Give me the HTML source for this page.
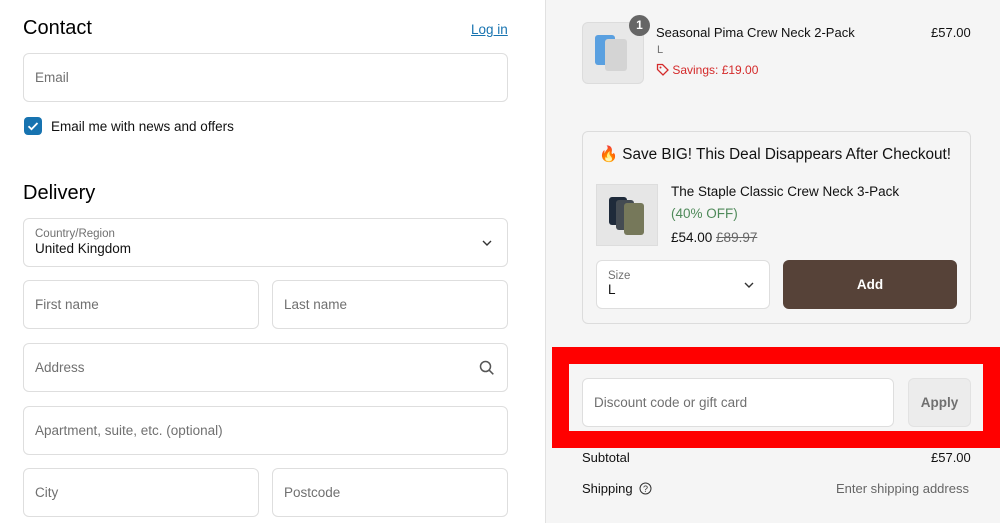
<!DOCTYPE html>
<html><head><meta charset="utf-8"><style>
*{box-sizing:border-box;margin:0;padding:0}
body{width:1000px;height:523px;overflow:hidden;font-family:"Liberation Sans",Arial,sans-serif;background:#fff;position:relative;color:#000}
.a{position:absolute}
.in{position:absolute;border:1px solid #dedede;border-radius:6px;background:#fff;font-size:13.5px;color:#707070;padding-left:11px;display:flex;align-items:center}
h2{position:absolute;font-weight:400;font-size:20px}
.r{position:absolute;left:545px;top:0;width:455px;height:523px;background:#f5f5f5;border-left:1px solid #e1e1e1}
</style></head><body>
<h2 style="left:23px;top:17px">Contact</h2>
<div class="a" style="left:471px;top:22px;font-size:13.5px;color:#1773b0;text-decoration:underline">Log in</div>
<div class="in" style="left:23px;top:53px;width:485px;height:49px">Email</div>
<div class="a" style="left:24px;top:117px;width:18px;height:18px;background:#1773b0;border-radius:4px"><svg width="18" height="18"><path d="M4.5 9.2l3 3 6-6.2" stroke="#fff" stroke-width="1.8" fill="none"/></svg></div>
<div class="a" style="left:51px;top:119px;font-size:13.5px;color:#111">Email me with news and offers</div>
<h2 style="left:23px;top:182px">Delivery</h2>
<div class="in" style="left:23px;top:218px;width:485px;height:49px;display:block;padding-top:9px">
<div style="font-size:11.5px;color:#707070">Country/Region</div><div style="font-size:13.5px;color:#111;margin-top:1px">United Kingdom</div>
<svg class="a" style="right:14px;top:19px" width="12" height="10"><path d="M2 3l4 4 4-4" stroke="#333" stroke-width="1.4" fill="none"/></svg></div>
<div class="in" style="left:23px;top:280px;width:236px;height:49px">First name</div>
<div class="in" style="left:272px;top:280px;width:236px;height:49px">Last name</div>
<div class="in" style="left:23px;top:343px;width:485px;height:49px">Address
<svg class="a" style="right:12px;top:16px" width="16" height="16"><circle cx="6.5" cy="6.5" r="5" stroke="#555" stroke-width="1.5" fill="none"/><path d="M10.3 10.3l4 4" stroke="#555" stroke-width="1.5"/></svg></div>
<div class="in" style="left:23px;top:406px;width:485px;height:49px">Apartment, suite, etc. (optional)</div>
<div class="in" style="left:23px;top:468px;width:236px;height:49px">City</div>
<div class="in" style="left:272px;top:468px;width:236px;height:49px">Postcode</div>
<div class="r"></div>
<div class="a" style="left:582px;top:22px;width:62px;height:62px;border:1px solid #dcdcdc;border-radius:6px;background:#e8e8e8">
<div class="a" style="left:12px;top:12px;width:20px;height:30px;background:#5aa0e0;border-radius:3px"></div>
<div class="a" style="left:22px;top:16px;width:22px;height:32px;background:#d4d4d4;border-radius:3px"></div></div>
<div class="a" style="left:629px;top:15px;width:21px;height:21px;border-radius:50%;background:#666;color:#fff;font-size:12px;font-weight:bold;text-align:center;line-height:21px">1</div>
<div class="a" style="left:656px;top:25px;font-size:13px;color:#111">Seasonal Pima Crew Neck 2-Pack</div>
<div class="a" style="left:931px;top:25px;font-size:13px;color:#111">£57.00</div>
<div class="a" style="left:657px;top:44px;font-size:11px;color:#707070">L</div>
<div class="a" style="left:656px;top:63px;font-size:12px;color:#d42a2a">
<svg width="13" height="13" style="vertical-align:-2px"><path d="M1.5 6.5V1.5h5l5.5 5.5-5 5z" stroke="#d42a2a" stroke-width="1.3" fill="none"/><circle cx="4.5" cy="4.5" r="1" fill="#d42a2a"/></svg> Savings: £19.00</div>
<div class="a" style="left:582px;top:131px;width:389px;height:193px;border:1px solid #dcdcdc;border-radius:6px"></div>
<div class="a" style="left:599px;top:145px;font-size:15.3px;color:#111">🔥 Save BIG! This Deal Disappears After Checkout!</div>
<div class="a" style="left:596px;top:184px;width:62px;height:62px;background:#e6e6e6;border:1px solid #ddd">
<div class="a" style="left:12px;top:12px;width:18px;height:28px;background:#1e2a3a;border-radius:3px"></div>
<div class="a" style="left:19px;top:15px;width:18px;height:30px;background:#444b52;border-radius:3px"></div>
<div class="a" style="left:27px;top:18px;width:20px;height:32px;background:#76785a;border-radius:3px"></div></div>
<div class="a" style="left:671px;top:184px;font-size:13.5px;color:#111">The Staple Classic Crew Neck 3-Pack</div>
<div class="a" style="left:671px;top:206px;font-size:13.5px;color:#4f8a5a">(40% OFF)</div>
<div class="a" style="left:671px;top:230px;font-size:13.5px;color:#111">£54.00 <span style="color:#666;text-decoration:line-through">£89.97</span></div>
<div class="a" style="left:596px;top:260px;width:174px;height:49px;background:#fff;border:1px solid #dedede;border-radius:6px;padding:9px 0 0 11px">
<div style="font-size:11.5px;color:#707070">Size</div><div style="font-size:13.5px;color:#111">L</div>
<svg class="a" style="right:14px;top:19px" width="12" height="10"><path d="M2 3l4 4 4-4" stroke="#333" stroke-width="1.4" fill="none"/></svg></div>
<div class="a" style="left:783px;top:260px;width:174px;height:49px;background:#564238;border-radius:6px;color:#fff;font-weight:bold;font-size:13.5px;text-align:center;line-height:49px">Add</div>
<div class="a" style="left:552px;top:347px;width:448px;height:101px;background:#f00"></div>
<div class="a" style="left:569px;top:364px;width:414px;height:67px;background:#f5f5f5"></div>
<div class="in" style="left:582px;top:378px;width:312px;height:49px">Discount code or gift card</div>
<div class="a" style="left:908px;top:378px;width:63px;height:49px;background:#ececec;border:1px solid #e2e2e2;border-radius:6px;color:#707070;font-size:13.5px;font-weight:bold;text-align:center;line-height:47px">Apply</div>
<div class="a" style="left:582px;top:450px;font-size:13px;color:#111">Subtotal</div>
<div class="a" style="left:931px;top:450px;font-size:13px;color:#111">£57.00</div>
<div class="a" style="left:582px;top:481px;font-size:13px;color:#111">Shipping <svg width="13" height="13" style="vertical-align:-2px;margin-left:3px"><circle cx="6.5" cy="6.5" r="5.5" stroke="#333" fill="none"/><text x="6.5" y="10" font-size="9" text-anchor="middle" fill="#333" font-family="Liberation Sans">?</text></svg></div>
<div class="a" style="left:836px;top:481px;font-size:13px;color:#666">Enter shipping address</div>
</body></html>
